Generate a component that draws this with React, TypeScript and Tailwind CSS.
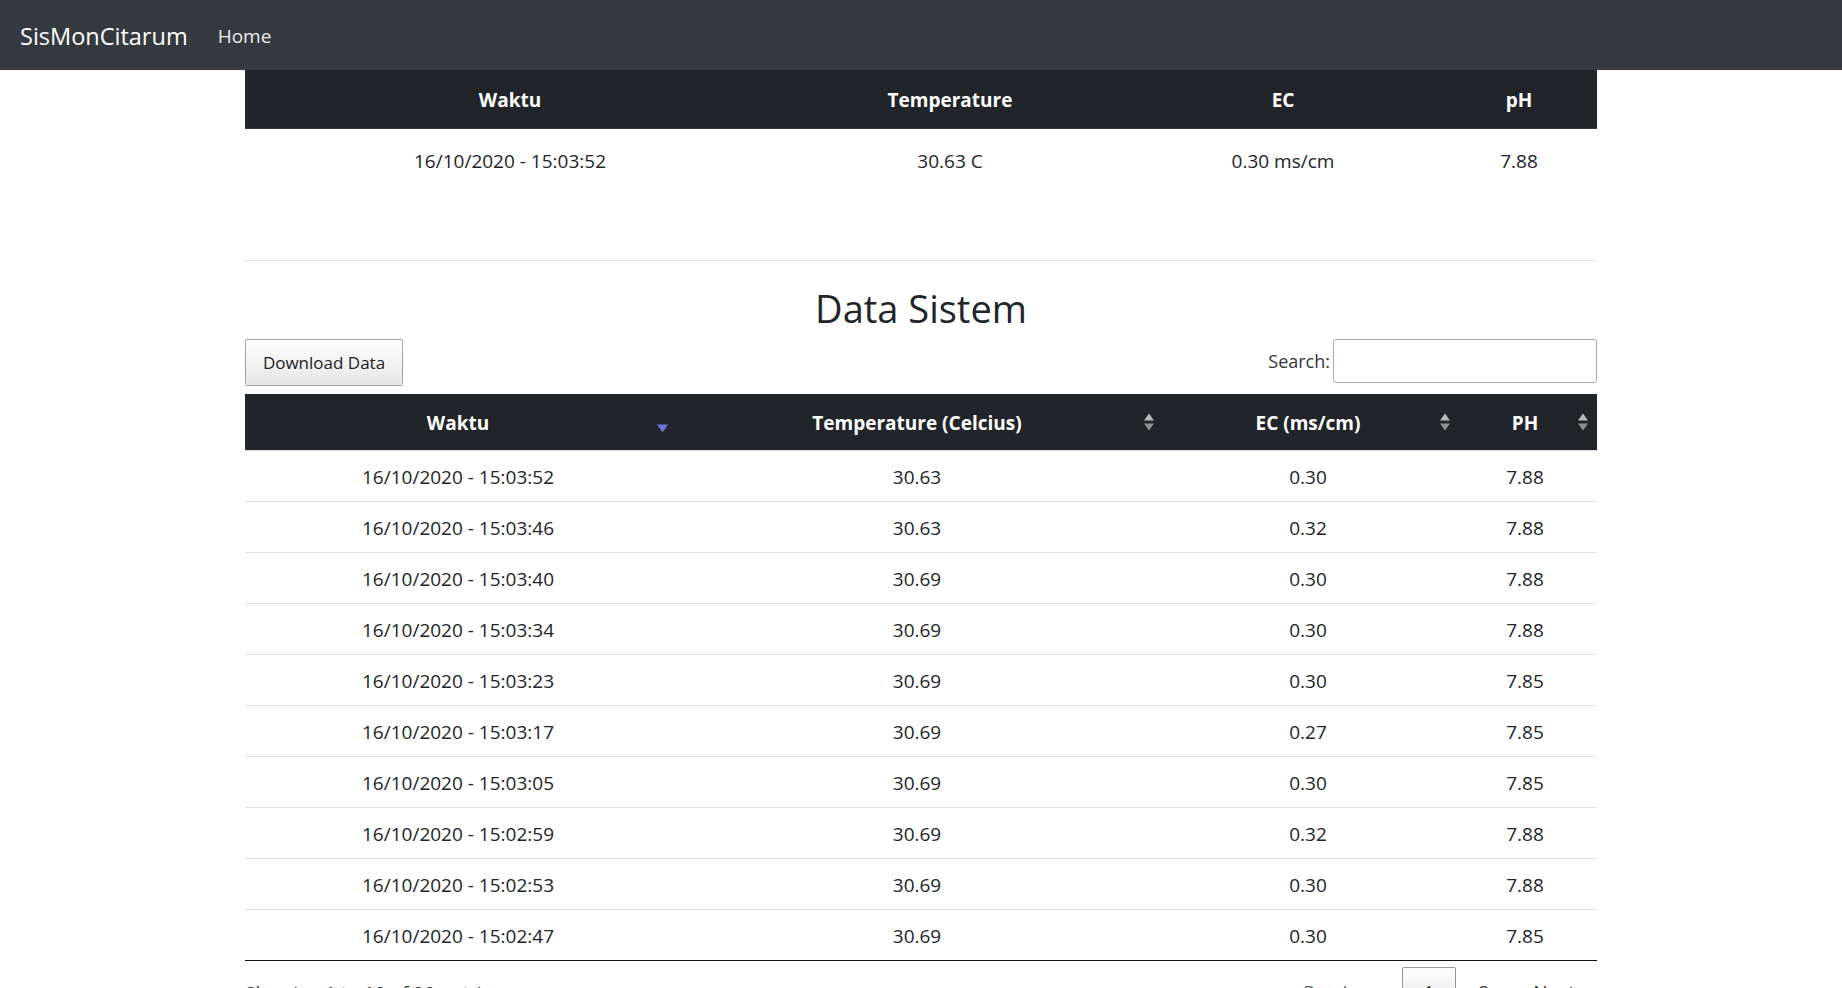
import React from 'react';

const rows = [
  ['16/10/2020 - 15:03:52', '30.63', '0.30', '7.88'],
  ['16/10/2020 - 15:03:46', '30.63', '0.32', '7.88'],
  ['16/10/2020 - 15:03:40', '30.69', '0.30', '7.88'],
  ['16/10/2020 - 15:03:34', '30.69', '0.30', '7.88'],
  ['16/10/2020 - 15:03:23', '30.69', '0.30', '7.85'],
  ['16/10/2020 - 15:03:17', '30.69', '0.27', '7.85'],
  ['16/10/2020 - 15:03:05', '30.69', '0.30', '7.85'],
  ['16/10/2020 - 15:02:59', '30.69', '0.32', '7.88'],
  ['16/10/2020 - 15:02:53', '30.69', '0.30', '7.88'],
  ['16/10/2020 - 15:02:47', '30.69', '0.30', '7.85'],
];

// column grid shared by header + body of the data table
const cols = 'grid grid-cols-[432px_486px_296px_138px]';

function SortBoth() {
  return (
    <svg width="10" height="20" viewBox="0 0 10 20" className="absolute right-[9px] top-1/2 -translate-y-1/2">
      <polygon points="0,8.5 5,1.5 10,8.5" fill="#b8b8b8" />
      <polygon points="0,11.5 10,11.5 5,18.5" fill="#909090" />
    </svg>
  );
}

function SortDesc() {
  return (
    <svg width="11" height="20" viewBox="0 0 11 20" className="absolute right-[9px] top-1/2 -translate-y-[38%]">
      <polygon points="0,10 11,10 5.5,18" fill="#6f73dc" />
    </svg>
  );
}

function HeadCell({ label, active }: { label: string; active?: boolean }) {
  return (
    <div className="relative flex items-center justify-center pl-[12px] pr-[18px] pt-[3px] font-bold">
      {label}
      {active ? <SortDesc /> : <SortBoth />}
    </div>
  );
}

export default function App() {
  return (
    <div className="min-h-screen bg-white text-[19px] text-[#212529]" style={{ fontFamily: '"Open Sans", "Noto Sans", sans-serif' }}>
      <nav className="flex h-[70px] items-center bg-[#343a40] pl-[20px] pt-[3px]">
        <span className="text-[23.5px] text-white">SisMonCitarum</span>
        <span className="ml-[30px] text-[19px] text-white/90">Home</span>
      </nav>

      <main className="mx-auto w-[1352px]">
        {/* latest reading */}
        <div className="grid grid-cols-[530px_350px_316px_156px] text-center">
          <div className="flex h-[59px] items-center justify-center border-b border-[#32383e] bg-[#212529] pt-[2px] font-bold text-white">Waktu</div>
          <div className="flex h-[59px] items-center justify-center border-b border-[#32383e] bg-[#212529] pt-[2px] font-bold text-white">Temperature</div>
          <div className="flex h-[59px] items-center justify-center border-b border-[#32383e] bg-[#212529] pt-[2px] font-bold text-white">EC</div>
          <div className="flex h-[59px] items-center justify-center border-b border-[#32383e] bg-[#212529] pt-[2px] font-bold text-white">pH</div>
          <div className="flex h-[62px] items-center justify-center pt-[3px]">16/10/2020 - 15:03:52</div>
          <div className="flex h-[62px] items-center justify-center pt-[3px]">30.63 C</div>
          <div className="flex h-[62px] items-center justify-center pt-[3px]">0.30 ms/cm</div>
          <div className="flex h-[62px] items-center justify-center pt-[3px]">7.88</div>
        </div>

        <hr className="mt-[69px] border-t border-[#e5e5e5]" />

        <h2 className="mt-[24px] text-center text-[38px] leading-[46px] font-medium">Data Sistem</h2>

        <div className="mt-[8px] flex items-start justify-between">
          <button className="h-[47px] w-[158px] rounded-[2px] border border-[#a3a3a3] bg-gradient-to-b from-white to-[#e6e6e6] text-[17px] text-[#222]">
            Download Data
          </button>
          <label className="flex items-center">
            <span className="mr-[3px] text-[18px] text-[#333]">Search:</span>
            <input className="h-[44px] w-[264px] rounded-[3px] border border-[#aaa] bg-white px-2 outline-none" />
          </label>
        </div>

        <div className="mt-[8px]">
          <div className={`${cols} h-[56px] bg-[#212529] text-white`}>
            <HeadCell label="Waktu" active />
            <HeadCell label="Temperature (Celcius)" />
            <HeadCell label="EC (ms/cm)" />
            <HeadCell label="PH" />
          </div>
          {rows.map((r, i) => (
            <div key={i} className={`${cols} h-[51px] border-t border-[#dee2e6] text-center`}>
              {r.map((v, j) => (
                <div key={j} className="flex items-center justify-center pl-[12px] pr-[18px] pt-[3px]">
                  {v}
                </div>
              ))}
            </div>
          ))}
          <div className="border-t border-[#111]" />
        </div>

        <div className="mt-[6px] flex items-start justify-between">
          <div className="pt-[12px] text-[#333]">Showing 1 to 10 of 20 entries</div>
          <div className="flex items-center text-[#333]">
            <span className="px-[22px] py-[10px] text-[#666]">Previous</span>
            <span className="rounded-[2px] border border-[#979797] bg-gradient-to-b from-white to-[#dcdcdc] px-[21px] py-[10px]">1</span>
            <span className="px-[22px] py-[10px]">2</span>
            <span className="px-[22px] py-[10px]">Next</span>
          </div>
        </div>
        <div className="h-[40px]" />
      </main>
    </div>
  );
}
